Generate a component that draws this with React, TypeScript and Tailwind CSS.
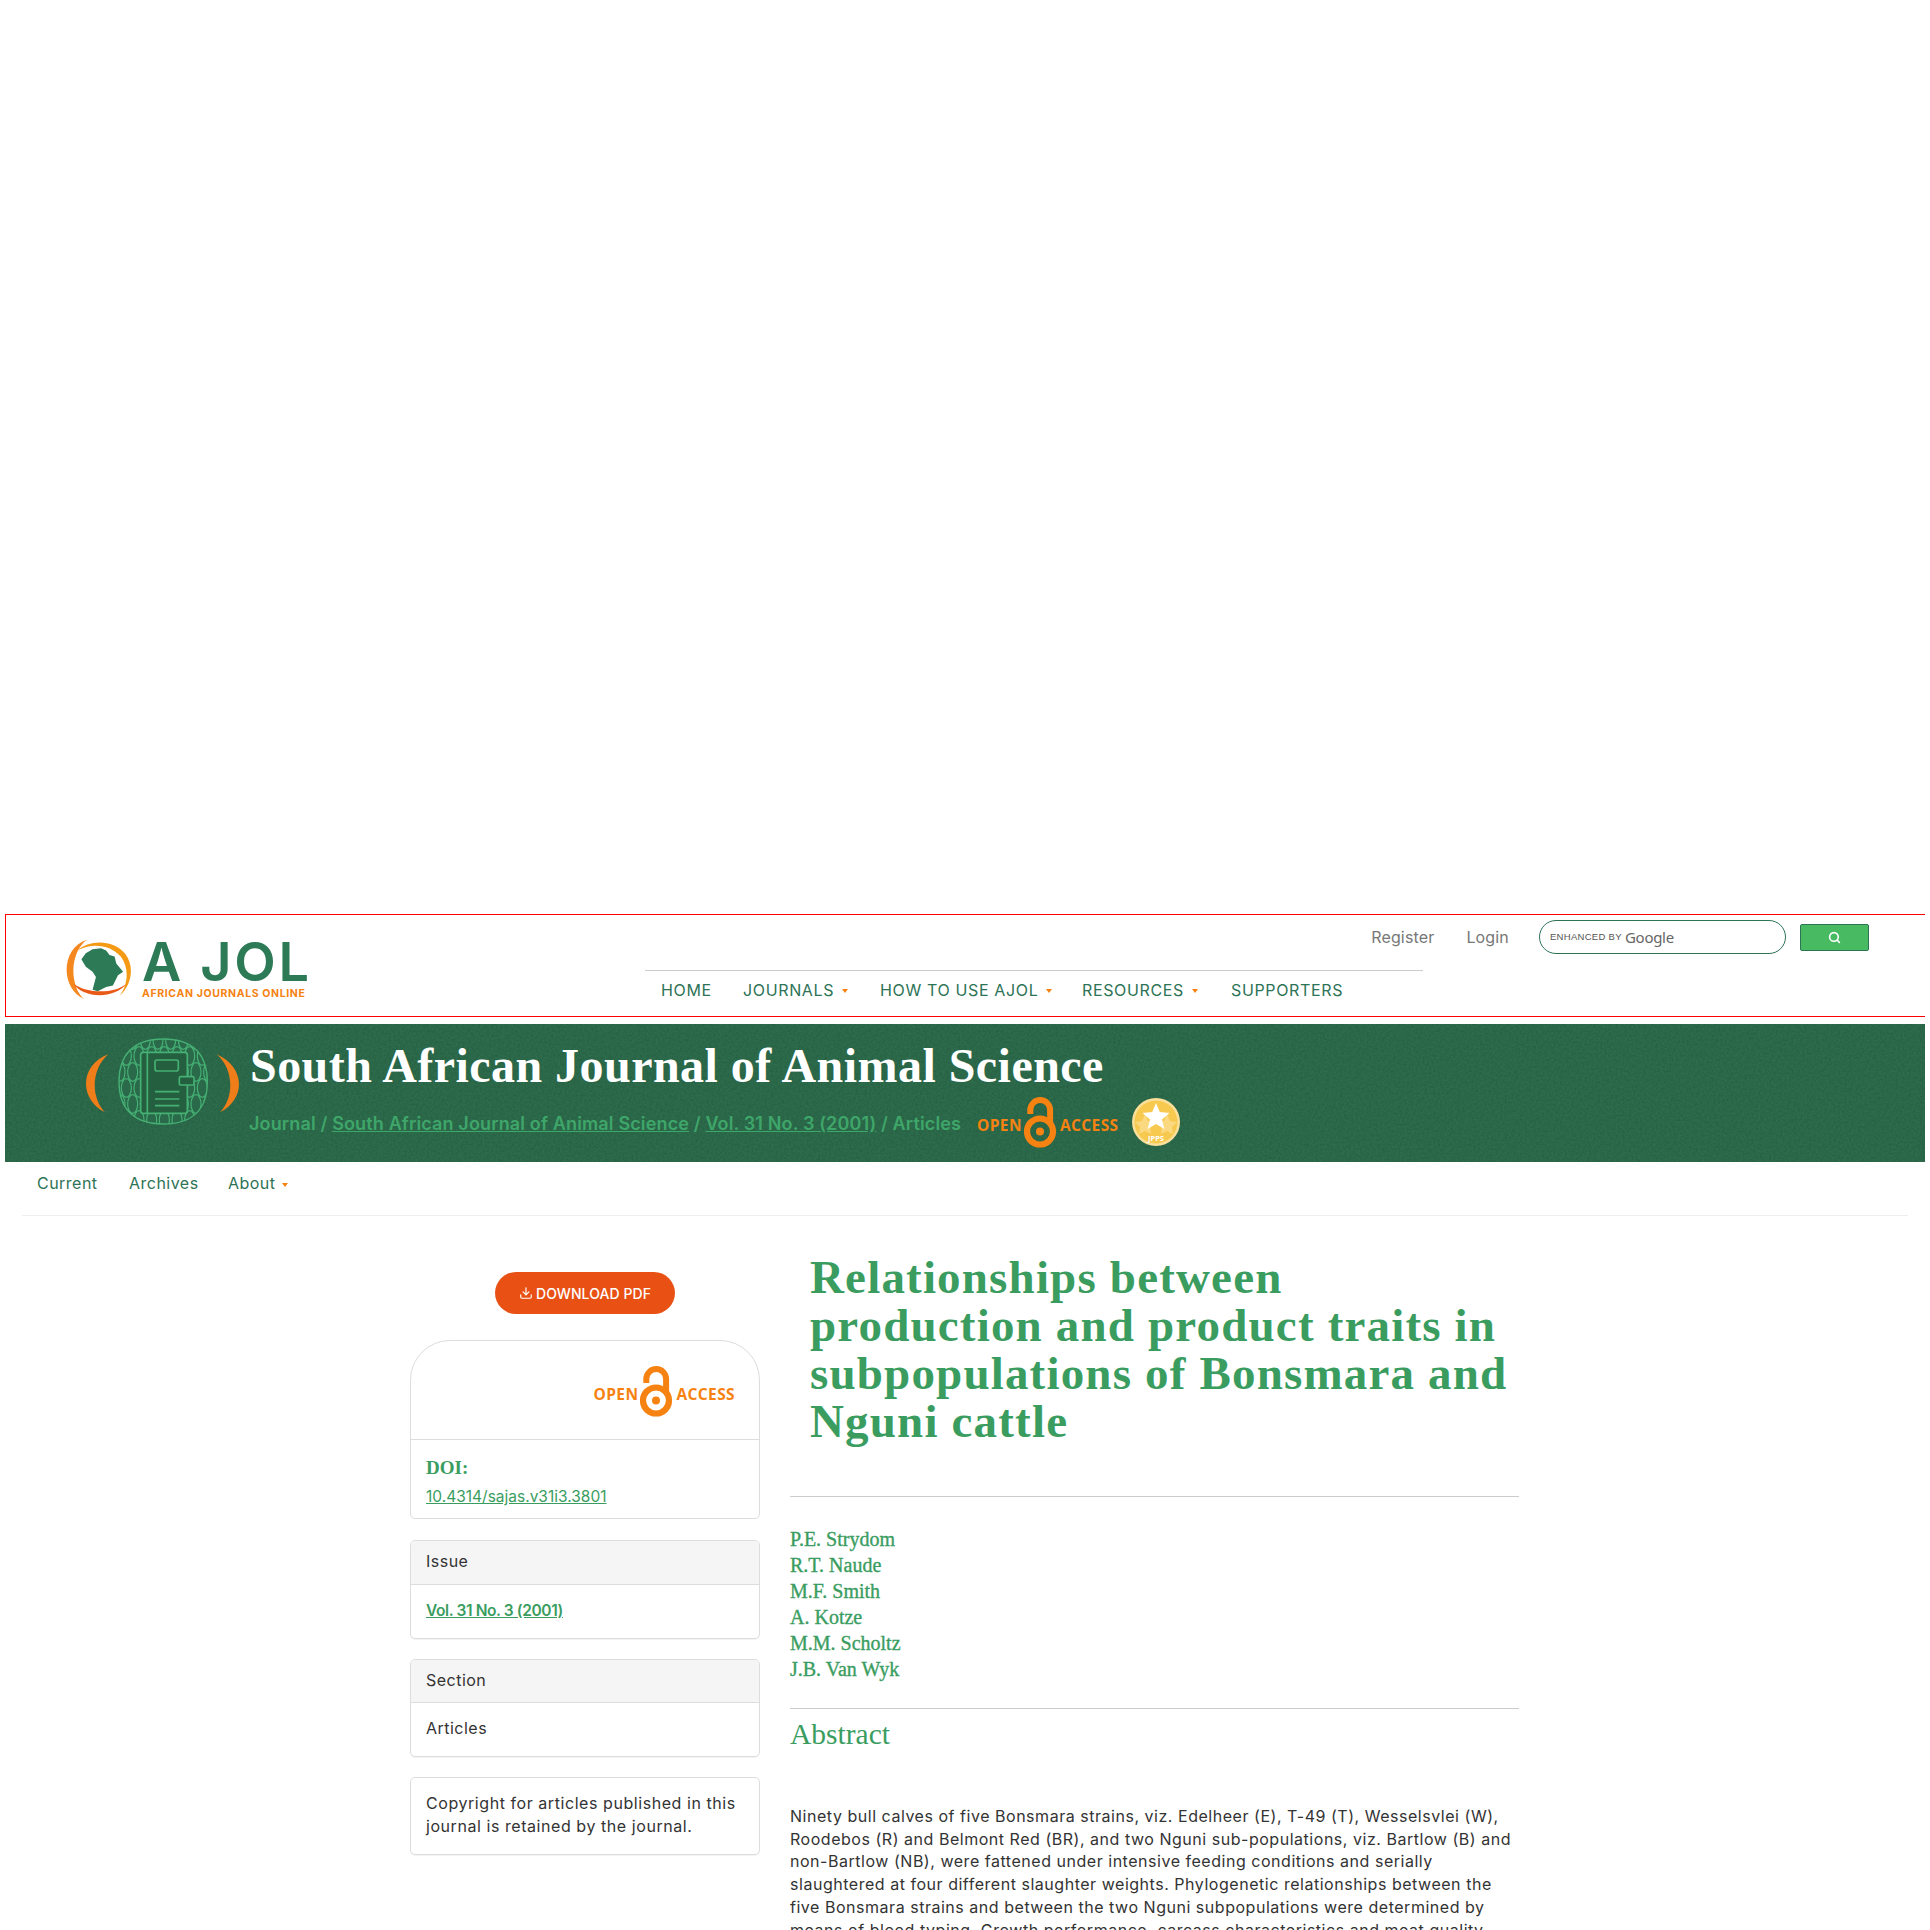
import React from "react";
import { Download, Search } from "lucide-react";

const sans = "font-['Inter','Liberation_Sans',sans-serif]";

function Caret() {
  return <span className="inline-block w-0 h-0 border-x-[3.5px] border-t-[4px] border-x-transparent border-t-[#f68212]" />;
}

function OpenAccess({ className = "" }: { className?: string }) {
  return (
    <div className={`flex items-center text-[#f68212] font-['Open_Sans',sans-serif] font-bold text-[15.5px] leading-none tracking-[0.025em] ${className}`}>
      <span className="mt-[7px] w-[47px]">OPEN</span>
      <svg width="33" height="51" viewBox="0 0 33 51" fill="none" className="shrink-0">
        <path d="M6.3 17V13A9.9 9.9 0 0 1 26.1 13V26" stroke="#f68212" strokeWidth="6" />
        <circle cx="16" cy="34.5" r="13" stroke="#f68212" strokeWidth="6.2" />
        <circle cx="16" cy="34.5" r="4" fill="#f68212" />
      </svg>
      <span className="mt-[7px] ml-[3px]">ACCESS</span>
    </div>
  );
}

function Logo() {
  return (
    <div className="flex items-start w-[243px] ml-[58px] mt-[24px] shrink-0">
      <svg width="69" height="61" viewBox="45 28 195 180" className="shrink-0">
        <path d="M108 30C30 55 30 175 100 205C58 170 55 70 108 30Z" fill="#f5871f" />
        <path d="M80 62C115 30 185 28 222 72C250 110 240 165 205 195C232 160 232 110 208 80C175 42 120 40 80 62Z" fill="#f59a14" />
        <path d="M68 160C100 205 190 205 225 160C190 190 110 190 68 160Z" fill="#ea5a17" />
        <path d="M92 88L105 70L125 58L150 55L165 62L175 75L190 80L195 100L215 125L200 135L185 165L165 170L140 182L125 178L135 140L125 125L105 110Z" fill="#2d7a57" />
      </svg>
      <div className="ml-[9px] flex flex-col">
        <span className="font-['Inter',sans-serif] font-semibold text-[#2d7a57] text-[54px] leading-[46px] tracking-[0.05em] h-[46px] whitespace-nowrap">A JOL</span>
        <span className="font-['Inter',sans-serif] font-bold text-[#f68212] text-[10.5px] leading-[10px] mt-[4px] tracking-[0.06em] whitespace-nowrap">AFRICAN JOURNALS ONLINE</span>
      </div>
    </div>
  );
}

function JournalMark() {
  const cells = [];
  for (let y = 0; y < 6; y++) {
    for (let x = 0; x < 8; x++) {
      cells.push(<ellipse key={`${x}-${y}`} cx={150 + x * 38 + (y % 2) * 19} cy={45 + y * 48} rx="15" ry="28" />);
    }
  }
  return (
    <svg width="155" height="89" viewBox="45 40 465 265" className="shrink-0" fill="none">
      <defs>
        <clipPath id="blob">
          <path d="M280 42C370 42 412 90 412 170C412 250 370 297 280 297C190 297 147 250 147 170C147 90 190 42 280 42Z" />
        </clipPath>
      </defs>
      <path d="M115 88C30 120 25 220 105 262C60 215 65 130 115 88Z" fill="#ee7d1a" />
      <path d="M440 88C525 125 530 220 450 262C495 215 490 130 440 88Z" fill="#ee7d1a" />
      <path d="M280 42C370 42 412 90 412 170C412 250 370 297 280 297C190 297 147 250 147 170C147 90 190 42 280 42Z" fill="#2a6a4a" stroke="#46b074" strokeWidth="4" />
      <g clipPath="url(#blob)" stroke="#46b074" strokeWidth="3.5">{cells}</g>
      <rect x="212" y="82" width="140" height="183" rx="8" fill="#24603f" stroke="#46b074" strokeWidth="5" />
      <path d="M232 82V265" stroke="#46b074" strokeWidth="5" />
      <rect x="255" y="105" width="70" height="33" rx="6" stroke="#46b074" strokeWidth="5" />
      <rect x="328" y="155" width="44" height="25" rx="4" fill="#24603f" stroke="#46b074" strokeWidth="5" />
      <path d="M255 200H328M255 222H328M255 242H328" stroke="#46b074" strokeWidth="5" />
    </svg>
  );
}

function Badge() {
  return (
    <svg width="48" height="48" viewBox="0 0 48 48" className="shrink-0 ml-[13px] mt-[4px]">
      <circle cx="24" cy="24" r="24" fill="#fae09a" />
      <circle cx="24" cy="24" r="21.5" fill="#f8c94f" />
      <path d="M13 16L16 23L23 24L18 29L19 36L13 33L7 36L8 29L3 24L10 23Z" fill="#fbd980" />
      <path d="M35 16L38 23L45 24L40 29L41 36L35 33L29 36L30 29L25 24L32 23Z" fill="#fbd980" />
      <path d="M24 5L27.8 14L37.5 15L30 21.5L32.3 31L24 26L15.7 31L18 21.5L10.5 15L20.2 14Z" fill="#ffffff" />
      <text x="24" y="43" textAnchor="middle" fontSize="7.5" fontWeight="700" fill="#ffffff" fontFamily="Open Sans, sans-serif">JPPS</text>
    </svg>
  );
}

function Noise() {
  return (
    <svg className="absolute inset-0 w-full h-full opacity-[0.2] pointer-events-none">
      <filter id="grain">
        <feTurbulence type="fractalNoise" baseFrequency="0.45" numOctaves="3" />
        <feColorMatrix type="matrix" values="0 0 0 0 0  0 0 0 0 0  0 0 0 0 0  0 0 0 1.1 -0.4" />
      </filter>
      <rect width="100%" height="100%" filter="url(#grain)" />
    </svg>
  );
}

function TopHeader() {
  const items: [string, string, boolean][] = [
    ["HOME", "w-[82px]", false],
    ["JOURNALS", "w-[137px]", true],
    ["HOW TO USE AJOL", "w-[202px]", true],
    ["RESOURCES", "w-[149px]", true],
    ["SUPPORTERS", "", false],
  ];
  return (
    <header className="h-[103px] border-y border-l border-[#f00] flex bg-white">
      <Logo />
      <div className="w-[778px] ml-[338px] relative mt-[55px] border-t border-[#ccc] h-fit">
        <nav className="flex pl-[16px] pt-[9px] text-[16px] leading-[20px] text-[#2d7356] tracking-[0.04em]">
          {items.map(([t, w, c]) => (
            <div key={t} className={`flex items-center shrink-0 whitespace-nowrap ${w}`}>
              {t}
              {c && <span className="ml-[8px] mt-[2px] flex"><Caret /></span>}
            </div>
          ))}
        </nav>
      </div>
      <div className="absolute right-[61px] top-[920px] flex items-center">
        <span className="text-[16px] text-[#777] tracking-[0.01em] mr-[32px]">Register</span>
        <span className="text-[16px] text-[#777] tracking-[0.01em] mr-[30px]">Login</span>
        <div className="w-[247px] h-[34px] border border-[#2d7356] rounded-[17px] flex items-center pl-[10px] bg-white">
          <span className="text-[9.5px] text-[#555] font-['Liberation_Sans',sans-serif] tracking-[0.03em] w-[75px] whitespace-nowrap">ENHANCED BY</span>
          <span className="text-[15px] text-[#666] font-['Noto_Sans',sans-serif] tracking-[-0.02em]">Google</span>
        </div>
        <button className="w-[69px] h-[27px] ml-[14px] bg-[#48bb62] border border-[#2d7356] rounded-[2px] flex items-center justify-center">
          <Search size={13} strokeWidth={3} color="#fff" />
        </button>
      </div>
    </header>
  );
}

function Banner() {
  return (
    <section className="relative h-[138px] mt-[7px] bg-[#2c6b4b] flex overflow-hidden">
      <Noise />
      <div className="relative ml-[80px] mt-[14px]"><JournalMark /></div>
      <div className="relative ml-[10px] flex flex-col">
        <h1 className="font-['Liberation_Serif',serif] font-bold text-white text-[48px] leading-[56px] mt-[14px] tracking-[0.0095em] whitespace-nowrap">South African Journal of Animal Science</h1>
        <div className="flex items-start -ml-[1px]">
          <div className="mt-[18px] text-[18px] leading-[24px] font-semibold text-[#3fa66a] tracking-[0.008em] whitespace-nowrap w-[728px]">
            Journal / <span className="underline">South African Journal of Animal Science</span> / <span className="underline">Vol. 31 No. 3 (2001)</span> / Articles
          </div>
          <OpenAccess className="mt-[3px]" />
          <Badge />
        </div>
      </div>
    </section>
  );
}

function SubNav() {
  return (
    <div className="mx-[17px] h-[54px] border-b border-[#eee] flex items-start pt-[9px] pl-[15px] text-[16px] leading-[24px] text-[#2d7356] tracking-[0.03em]">
      <span className="w-[92px]">Current</span>
      <span className="w-[99px]">Archives</span>
      <span className="flex items-center">About<span className="ml-[6px] mt-[3px] flex"><Caret /></span></span>
    </div>
  );
}

function Card({ head, headH = "h-[44px]", children }: { head?: string; headH?: string; children: React.ReactNode }) {
  return (
    <div className="border border-[#ddd] rounded-[5px] shadow-[0_1px_1px_rgba(0,0,0,0.05)] overflow-hidden">
      {head && <div className={`${headH} bg-[#f5f5f5] border-b border-[#ddd] px-[15px] pt-[8px] leading-[24px] text-[#333] tracking-[0.03em]`}>{head}</div>}
      {children}
    </div>
  );
}

function Sidebar() {
  return (
    <aside className="w-[350px] shrink-0 text-[16px]">
      <div className="flex justify-center pt-[56px]">
        <button className="w-[180px] h-[42px] rounded-[21px] bg-[#e95114] text-white text-[14px] font-medium flex items-center justify-center tracking-[0.005em]">
          <Download size={14} strokeWidth={2} className="mr-[3px]" />DOWNLOAD PDF
        </button>
      </div>
      <div className="mt-[26px] h-[179px] border border-[#ddd] rounded-t-[40px] rounded-b-[5px]">
        <div className="h-[99px] border-b border-[#ddd] flex justify-end items-start pr-[24px] pt-[25px]">
          <OpenAccess />
        </div>
        <div className="px-[15px] pt-[14px]">
          <div className="font-['Liberation_Serif',serif] font-bold text-[19px] leading-[28px] text-[#3a9d5f]">DOI:</div>
          <div className="text-[15.5px] leading-[24px] mt-[3px] text-[#3a9d5f] underline">10.4314/sajas.v31i3.3801</div>
        </div>
      </div>
      <div className="mt-[21px]">
        <Card head="Issue">
          <div className="h-[53px] px-[15px] pt-[14px] leading-[24px] text-[15.5px] font-semibold text-[#3a9d5f] underline tracking-[-0.025em]">Vol. 31 No. 3 (2001)</div>
        </Card>
      </div>
      <div className="mt-[20px]">
        <Card head="Section" headH="h-[43px]">
          <div className="h-[53px] px-[15px] pt-[13px] leading-[24px] text-[#333] tracking-[0.03em]">Articles</div>
        </Card>
      </div>
      <div className="mt-[20px]">
        <Card>
          <div className="h-[76px] px-[15px] pt-[14px] leading-[23px] text-[#333] tracking-[0.035em] whitespace-nowrap">
            Copyright for articles published in this<br />journal is retained by the journal.
          </div>
        </Card>
      </div>
    </aside>
  );
}

function Article() {
  const authors = ["P.E. Strydom", "R.T. Naude", "M.F. Smith", "A. Kotze", "M.M. Scholtz", "J.B. Van Wyk"];
  return (
    <main className="w-[729px] ml-[30px] shrink-0">
      <h2 className="pl-[20px] pt-[37px] font-['Liberation_Serif',serif] font-bold text-[47px] leading-[48px] text-[#3a9d5f] tracking-[0.025em] whitespace-nowrap">
        Relationships between<br />production and product traits in<br />subpopulations of Bonsmara and<br />Nguni cattle
      </h2>
      <hr className="mt-[51px] border-0 border-t border-[#ccc]" />
      <div className="mt-[29px] font-['Liberation_Serif',serif] text-[20px] leading-[26px] text-[#3a9d5f] [-webkit-text-stroke:0.35px_#3a9d5f]">
        {authors.map((a) => <div key={a}>{a}</div>)}
      </div>
      <hr className="mt-[26px] border-0 border-t border-[#ccc]" />
      <h3 className="mt-[8px] font-['Liberation_Serif',serif] text-[29.5px] leading-[34px] text-[#3a9d5f]">Abstract</h3>
      <p className="mt-[54px] text-[16px] leading-[22.7px] text-[#333] tracking-[0.033em] whitespace-nowrap">
        Ninety bull calves of five Bonsmara strains, viz. Edelheer (E), T-49 (T), Wesselsvlei (W),<br />
        Roodebos (R) and Belmont Red (BR), and two Nguni sub-populations, viz. Bartlow (B) and<br />
        non-Bartlow (NB), were fattened under intensive feeding conditions and serially<br />
        slaughtered at four different slaughter weights. Phylogenetic relationships between the<br />
        five Bonsmara strains and between the two Nguni subpopulations were determined by<br />
        means of blood typing. Growth performance, carcass characteristics and meat quality
      </p>
    </main>
  );
}

export default function App() {
  return (
    <div className={`${sans} h-[1930px] overflow-hidden bg-white pl-[5px] pr-[5px] pt-[914px]`}>
      <TopHeader />
      <Banner />
      <SubNav />
      <div className="flex pl-[405px]">
        <Sidebar />
        <Article />
      </div>
    </div>
  );
}
